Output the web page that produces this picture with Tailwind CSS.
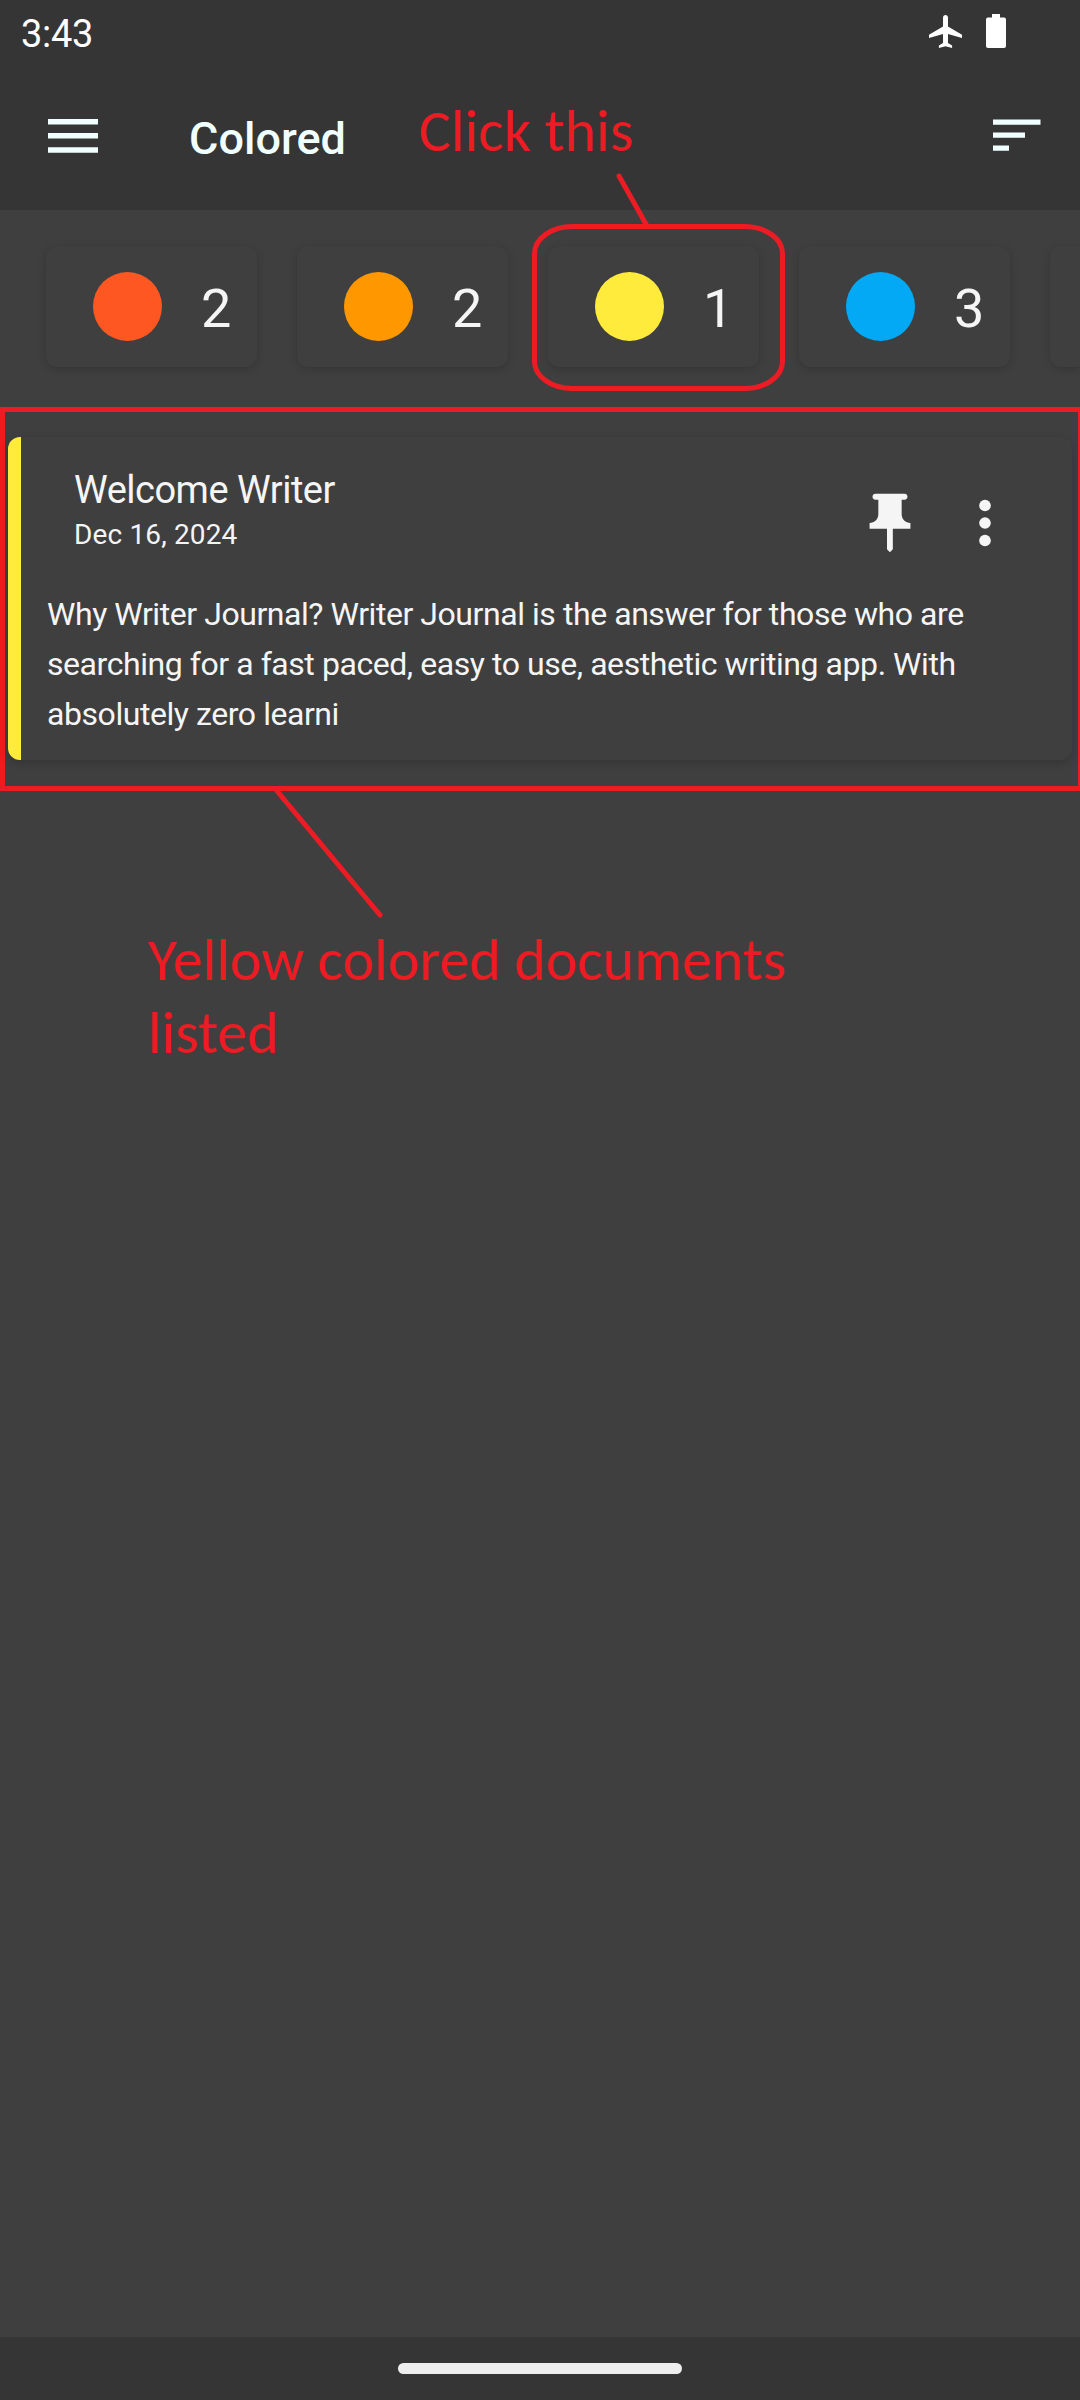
<!DOCTYPE html>
<html lang="en">
<head>
<meta charset="utf-8">
<title>Colored</title>
<script src="https://cdn.jsdelivr.net/npm/@tailwindcss/browser@4"></script>
</head>
<body class="relative flex h-[2400px] w-[1080px] flex-col overflow-hidden bg-[#3f3f3f] font-['Roboto',sans-serif] text-[#f5f5f5]">
  <header class="h-[210px] shrink-0 bg-[#353535]">
    <div class="flex h-16 items-center justify-between pl-[21px] pr-[74px] text-white">
      <span class="pt-[3px] text-[38px] leading-none tracking-[-0.3px]">3:43</span>
      <div class="flex items-center gap-6 pb-[2px]">
        <svg class="h-[33px] w-[33px]" viewBox="2 2 20 20" preserveAspectRatio="none" fill="currentColor"><path d="M22 16v-2l-8.500-5V3.500C13.500 2.670 12.830 2 12 2s-1.500.67-1.500 1.500V9L2 14v2l8.500-2.500V19L8 20.500V22l4-1 4 1v-1.500L13.500 19v-5.500L22 16z"/></svg>
        <svg class="h-[34px] w-5" viewBox="0 0 20 34" fill="currentColor"><path d="M6 0h8v3.500h4q2 0 2 2V32q0 2-2 2H2q-2 0-2-2V5.500q0-2 2-2h4z"/></svg>
      </div>
    </div>
    <div class="flex items-start pl-12 pt-[55px] text-[#f0ffff]">
      <svg class="h-[34px] w-[50px]" viewBox="0 0 50 34" fill="currentColor"><path d="M0 0h50v5.500H0zM0 14h50v5.500H0zM0 28.200h50v5.500H0z"/></svg>
      <h1 class="-mt-1 ml-[91px] text-[45px] leading-[48px] font-medium">Colored</h1>
      <svg class="mr-[39px] ml-auto h-[34px] w-12" viewBox="0 0 48 34" fill="currentColor"><path d="M0 .500h47.500v5.300H0zM0 13.500h32v5.300H0zM0 26.500h16v5.300H0z"/></svg>
    </div>
  </header>

  <section class="flex h-[197px] shrink-0 gap-10 overflow-hidden pl-[46px] pt-9 text-[54px] leading-none">
    <div class="flex h-[121px] w-[211px] shrink-0 items-center rounded-xl pl-[47px] shadow-[0_2px_8px_rgba(0,0,0,0.17)]"><i class="h-[69px] w-[69px] rounded-full bg-[#ff5722]"></i><span class="ml-[39px] pt-[5px]">2</span></div>
    <div class="flex h-[121px] w-[211px] shrink-0 items-center rounded-xl pl-[47px] shadow-[0_2px_8px_rgba(0,0,0,0.17)]"><i class="h-[69px] w-[69px] rounded-full bg-[#ff9800]"></i><span class="ml-[39px] pt-[5px]">2</span></div>
    <div class="flex h-[121px] w-[211px] shrink-0 items-center rounded-xl pl-[47px] shadow-[0_2px_8px_rgba(0,0,0,0.17)]"><i class="h-[69px] w-[69px] rounded-full bg-[#ffeb3b]"></i><span class="ml-[39px] pt-[5px]">1</span></div>
    <div class="flex h-[121px] w-[211px] shrink-0 items-center rounded-xl pl-[47px] shadow-[0_2px_8px_rgba(0,0,0,0.17)]"><i class="h-[69px] w-[69px] rounded-full bg-[#03a9f4]"></i><span class="ml-[39px] pt-[5px]">3</span></div>
    <div class="h-[121px] min-w-0 flex-1 rounded-l-xl shadow-[0_2px_8px_rgba(0,0,0,0.17)]"></div>
  </section>

  <section class="h-[384px] shrink-0 border-y-[5px] border-r-2 border-l-[5px] border-[#ed1c24] pt-[25px] pl-[3px]">
    <article class="flex h-[323px] w-[1064px] overflow-hidden rounded-xl shadow-[0_3px_8px_rgba(0,0,0,0.17)]">
      <div class="w-[13px] shrink-0 bg-[#ffeb3b]"></div>
      <div class="grow pt-[30px] pl-[26px]">
        <div class="flex h-[122px]">
          <div class="pl-[27px]">
            <h2 class="text-[38px] leading-[46px] tracking-[-0.5px]">Welcome Writer</h2>
            <p class="pt-px text-[28px] leading-[42px] tracking-[0.15px]">Dec 16, 2024</p>
          </div>
          <svg class="mt-[21px] mr-[25px] ml-auto h-[70px] w-[70px]" viewBox="0 0 24 24" fill="currentColor"><path d="M16 9V4h1c.55 0 1-.45 1-1s-.45-1-1-1H7c-.55 0-1 .45-1 1s.45 1 1 1h1v5c0 1.660-1.340 3-3 3v2h5.970v7l1 1 1-1v-7H19v-2c-1.660 0-3-1.340-3-3z"/></svg>
          <svg class="mt-[21px] mr-[52px] h-[70px] w-[70px]" viewBox="0 0 24 24" fill="currentColor"><circle cx="12" cy="6" r="2"/><circle cx="12" cy="12" r="2"/><circle cx="12" cy="18" r="2"/></svg>
        </div>
        <p class="text-[32px] leading-[50px] tracking-[-0.44px] whitespace-nowrap">Why Writer Journal? Writer Journal is the answer for those who are<br>searching for a fast paced, easy to use, aesthetic writing app. With<br>absolutely zero learni</p>
      </div>
    </article>
  </section>

  <p class="mt-[132px] ml-[148px] font-['Carlito','Lato',sans-serif] text-[60px] leading-[73px] tracking-[-0.05px] text-[#ed1c24]">Yellow colored documents<br>listed</p>

  <footer class="mt-auto flex h-[63px] shrink-0 justify-center bg-[#353535] pt-[26px]"><div class="h-[11px] w-[284px] rounded-full bg-[#eeeeee]"></div></footer>

  <!-- Callouts drawn over the screen -->
  <p class="absolute top-[94px] left-[419px] font-['Carlito','Lato',sans-serif] text-[60px] leading-[73px] whitespace-nowrap text-[#ed1c24]">Click this</p>
  <svg class="pointer-events-none absolute top-0 left-0 h-[1000px] w-[1080px]" viewBox="0 0 1080 1000" fill="none" stroke="#ed1c24" stroke-width="5" stroke-linecap="round"><path d="M619 176L647 226M277 791L380 915"/><rect x="534.5" y="226.500" width="248" height="162" rx="38" ry="27"/></svg>
</body>
</html>
